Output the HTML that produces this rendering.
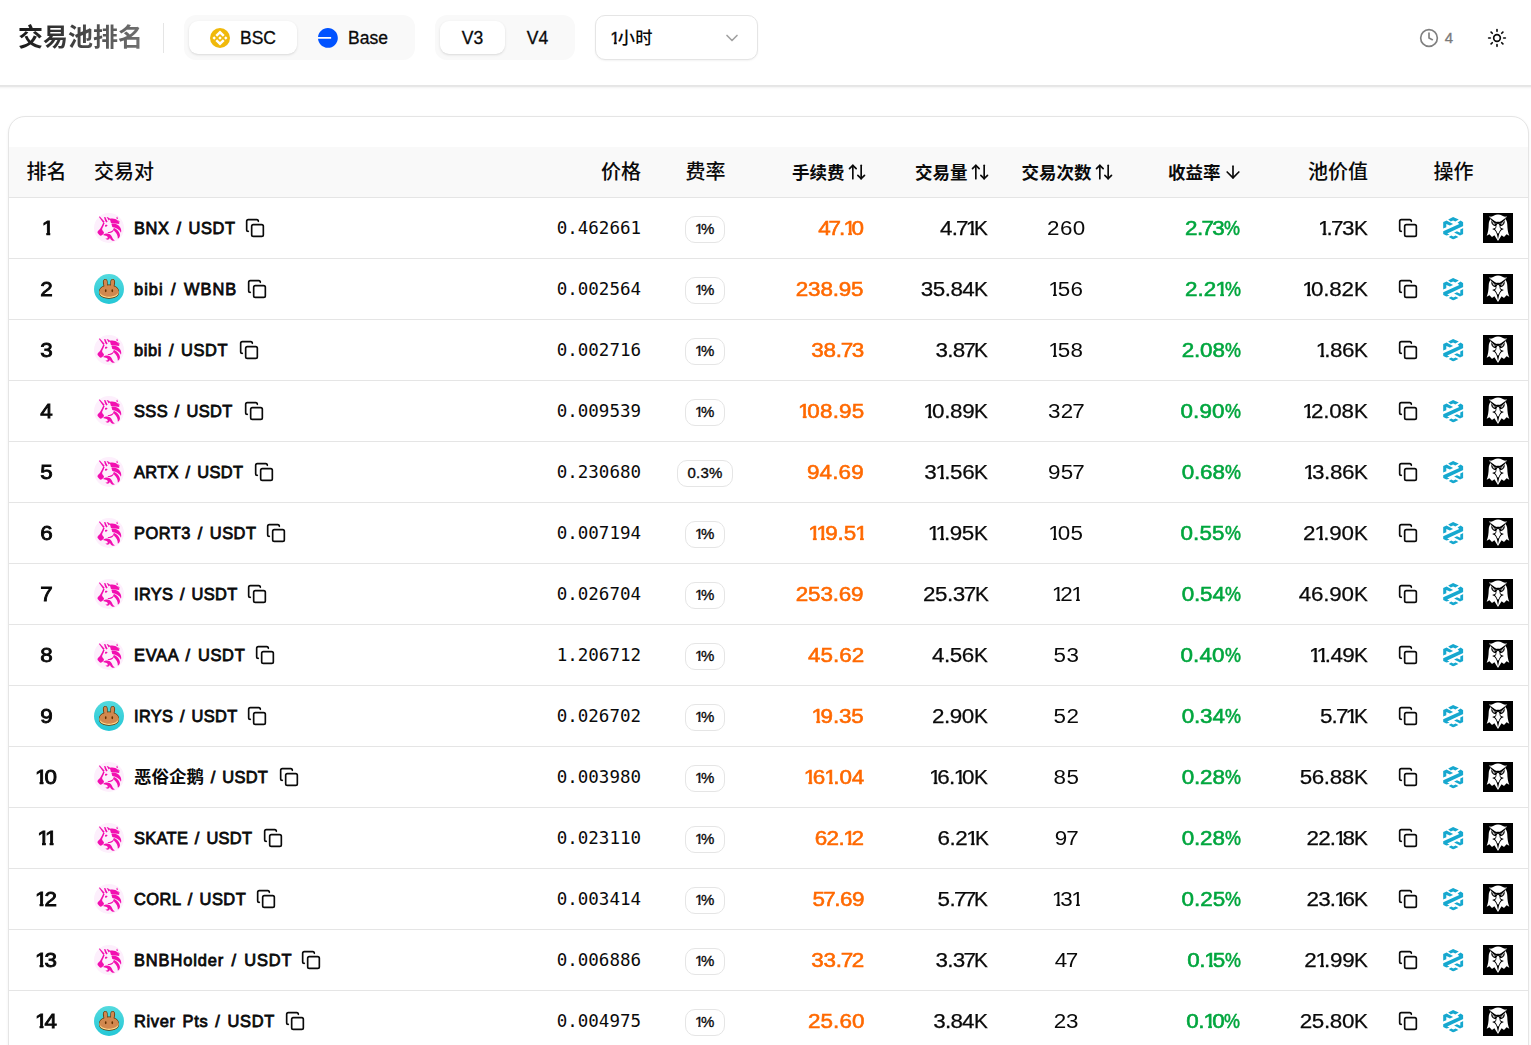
<!DOCTYPE html>
<html lang="zh-CN">
<head>
<meta charset="utf-8">
<title>交易池排名</title>
<style>
*{box-sizing:border-box;margin:0;padding:0}
html,body{width:1531px;height:1045px;overflow:hidden;background:#fff}
body{font-family:"Liberation Sans","Noto Sans CJK SC",sans-serif;color:#0a0a0a;position:relative;-webkit-font-smoothing:antialiased}
svg{display:block;overflow:visible}
.ln{fill:none;stroke:currentColor;stroke-width:2;stroke-linecap:round;stroke-linejoin:round}
/* header */
.hdr{position:absolute;left:-20px;top:0;width:1571px;padding:0;height:86px;background:#fff;border-bottom:1px solid #e5e5e5;box-shadow:0 1px 3px rgba(0,0,0,.10),0 1px 2px -1px rgba(0,0,0,.10)}
.hin{position:absolute;left:20px;top:0;width:1531px;height:85px}
.title{position:absolute;left:18px;top:19.4px;height:36px;line-height:36px;font-size:25px;font-weight:700;white-space:nowrap;background:linear-gradient(90deg,#171717 0%,#737373 100%);-webkit-background-clip:text;background-clip:text;color:#171717;-webkit-text-fill-color:transparent;font-family:"Liberation Sans","Noto Sans CJK SC",sans-serif}
.vdiv{position:absolute;left:163px;top:23px;width:1px;height:30px;background:#e5e5e5}
.tabs{position:absolute;top:15px;height:45px;background:#f9f9f9;border-radius:12px}
.tab{position:absolute;top:6px;height:33px;border-radius:9px;display:flex;align-items:center;justify-content:center;padding-top:2px;font-size:17.5px;line-height:25px;-webkit-text-stroke:.3px currentColor;color:#0a0a0a;white-space:nowrap}
.tab.on{background:#fff;box-shadow:0 1px 3px rgba(0,0,0,.10),0 1px 2px -1px rgba(0,0,0,.10)}
.tab svg{width:20px;height:20px;margin-right:10px;margin-top:-2px;flex:none}
.sel{position:absolute;left:595px;top:15px;width:163px;height:45px;border:1px solid #e5e5e5;border-radius:10px;background:#fff;box-shadow:0 1px 2px rgba(0,0,0,.05);font-size:17.3px;line-height:45px;padding-left:15.5px;white-space:nowrap;font-weight:500}
.sel .o{-webkit-text-stroke:.35px currentColor;margin:0 -.115em 0 -.075em}
.sel svg{position:absolute;left:126px;top:12px;width:20px;height:20px;color:#a1a1a1}
.clock{position:absolute;left:1419px;top:28px;width:20px;height:20px;color:#808080}
.cnt{position:absolute;left:1444.7px;top:28px;height:20px;line-height:20px;font-size:15px;color:#7a7a7a;-webkit-text-stroke:.35px currentColor}
.sun{position:absolute;left:1487px;top:28px;width:20px;height:20px;color:#0a0a0a}
/* card */
.card{position:absolute;left:8px;top:116px;width:1521px;height:960px;border:1px solid #e5e5e5;border-radius:17px;background:#fff;box-shadow:0 1px 3px rgba(0,0,0,.06);overflow:hidden}
.tbl{position:absolute;left:0;top:30px;width:1519px}
.thead{position:relative;height:51px;background:#f9f9f9;border-bottom:1px solid #e5e5e5}
.th{position:absolute;top:0;height:50px;line-height:50px;font-size:20px;font-weight:500;white-space:nowrap;color:#0a0a0a;font-family:"Liberation Sans","Noto Sans CJK SC",sans-serif}
.th.s{font-size:17.5px;font-weight:700;display:flex;align-items:center;padding-top:1.5px}
.th.s svg{width:20px;height:20px;margin-left:2.5px;margin-top:-1.5px;flex:none}
.row{position:relative;height:61px;border-bottom:1px solid #e5e5e5}
.c{position:absolute;top:0;height:60px;line-height:60px;white-space:nowrap;font-size:20px}
.n{display:inline-block;transform:scaleX(1.12);transform-origin:right center}
.n i{font-style:normal;display:inline-block}
.o{font-style:normal;display:inline-block;line-height:1;margin:0 -.155em 0 -.04em;clip-path:polygon(0 -.2em,100% -.2em,100% .6em,.38em .6em,.38em .87em,.21em .87em,.21em .6em,0 .6em)}
.n .s{margin:0 -1px}
.n .k{transform:scaleX(.93);margin:0 -.45px}
.n .p{transform:scaleX(.8);margin:0 -1.6px}
.rank{left:0;width:75px;text-align:center;-webkit-text-stroke:.85px currentColor}
.rank .n,.tx .n{transform-origin:center center}
.pair .n{transform-origin:left center;transform:none;word-spacing:1.8px}
.pair{left:85px;display:flex;align-items:center}
.tok{width:30px;height:30px;flex:none}
.pn{display:block;flex:none;font-size:16.4px;margin-left:10px;-webkit-text-stroke:.8px currentColor;font-family:"Liberation Sans","Noto Sans CJK SC",sans-serif}
.cj{font-weight:700;-webkit-text-stroke:0;font-size:17.5px;letter-spacing:0}
.cp{width:20px;height:20px;margin-left:10px;flex:none}
.price{right:887px;font-family:"DejaVu Sans Mono","Liberation Mono",monospace;font-size:17.5px}
.fee{left:646px;width:100px;text-align:center}
.badge{display:inline-block;width:40px;height:27px;line-height:23px;border:1px solid #e5e5e5;border-radius:10px;font-size:15px;vertical-align:middle;position:relative;top:-.5px;text-align:center;-webkit-text-stroke:.35px currentColor}

.badge.w{width:56px;letter-spacing:.15px}
.fees{right:664px;color:#ff6900;-webkit-text-stroke:.55px currentColor}
.vol{right:540px;-webkit-text-stroke:.25px currentColor}
.tx{left:1007px;width:100px;text-align:center}
.yld{right:287px;color:#00a63e;-webkit-text-stroke:.55px currentColor}
.tvl{right:160px;-webkit-text-stroke:.25px currentColor}
.act{left:0;width:1519px}
.a1{position:absolute;left:1389px;top:20px;width:20px;height:20px}
.a2{position:absolute;left:1433.7px;top:18.6px;width:20.4px;height:22.5px}
.a3{position:absolute;left:1474px;top:15px;width:30px;height:30px}
</style>
</head>
<body>
<svg width="0" height="0" style="position:absolute">
<defs>
<linearGradient id="g-cake" x1="0" y1="0" x2="0" y2="1"><stop offset="0" stop-color="#54dade"/><stop offset="1" stop-color="#24c7d6"/></linearGradient>
<symbol id="i-copy" viewBox="0 0 24 24"><g class="ln"><rect width="14" height="14" x="8" y="8" rx="2" ry="2"/><path d="M4 16c-1.1 0-2-.9-2-2V4c0-1.1.9-2 2-2h10c1.1 0 2 .9 2 2"/></g></symbol>
<symbol id="i-clock" viewBox="0 0 24 24"><g class="ln"><circle cx="12" cy="12" r="10"/><polyline points="12 6 12 12 16 14"/></g></symbol>
<symbol id="i-sun" viewBox="0 0 24 24"><g class="ln"><circle cx="12" cy="12" r="4"/><path d="M12 2v2"/><path d="M12 20v2"/><path d="m4.93 4.93 1.41 1.41"/><path d="m17.66 17.66 1.41 1.41"/><path d="M2 12h2"/><path d="M20 12h2"/><path d="m6.34 17.66-1.41 1.41"/><path d="m19.07 4.93-1.41 1.41"/></g></symbol>
<symbol id="i-ud" viewBox="0 0 24 24"><g class="ln"><path d="m21 16-4 4-4-4"/><path d="M17 20V4"/><path d="m3 8 4-4 4 4"/><path d="M7 4v16"/></g></symbol>
<symbol id="i-down" viewBox="0 0 24 24"><g class="ln"><path d="M12 5v14"/><path d="m19 12-7 7-7-7"/></g></symbol>
<symbol id="i-chev" viewBox="0 0 24 24"><g class="ln"><path d="m6 9 6 6 6-6"/></g></symbol>
<symbol id="i-bsc" viewBox="0 0 32 32"><circle cx="16" cy="16" r="16" fill="#F0B90B"/><path fill="#fff" transform="translate(16 16) scale(1.2) translate(-16 -16)" d="M12.116 14.404L16 10.52l3.886 3.886 2.26-2.26L16 6l-6.144 6.144 2.26 2.26zM6 16l2.26-2.26L10.52 16l-2.26 2.26L6 16zm6.116 1.596L16 21.48l3.886-3.886 2.26 2.259L16 26l-6.144-6.144-.003-.003 2.263-2.257zM21.48 16l2.26-2.26L26 16l-2.26 2.26L21.48 16zm-3.188-.002h.002V16L16 18.294l-2.291-2.29-.004-.004.004-.003.401-.402.195-.195L16 13.706l2.293 2.293z"/></symbol>
<symbol id="i-base" viewBox="0 0 111 111"><circle cx="55.5" cy="55.5" r="55" fill="#fff"/><path fill="#0052FF" d="M54.921 110.034C85.359 110.034 110.034 85.402 110.034 55.017C110.034 24.6319 85.359 0 54.921 0C26.0432 0 2.35281 22.1714 0 50.3923H72.8467V59.6416H0C2.35281 87.8625 26.0432 110.034 54.921 110.034Z"/></symbol>
<symbol id="i-uni" viewBox="0 0 100 100"><circle cx="50" cy="50" r="50" fill="#fdeffc"/><g fill="#f20fb0"><path d="M16 12.500 19.500 11.500 35.500 29.500 31 33z"/><path d="M33.500 13 38.500 14.500C40 20 42.500 25 45.500 29.500L40.500 32C37 26 34.500 19.500 33.500 13z"/><path d="M42 13.500C47 14.500 51.500 17 54 20.500L49 25C47 21 44.500 17 42 13.500z"/><path d="M31 32 35.500 33.500C33.500 40 31 46 27.500 51.500 26.500 54 27 56 28.500 58L32 62.500C34 65 33.500 68 31 70L26.500 74C23.500 76 20.500 76 18 73.500L13.500 68.500C11 65.500 11 61.500 14 59L20 53C24.500 47 28 39.500 31 32z"/><path d="M36.500 40.500C39 38.500 42.500 38.500 45 40.500 44 44 41 46 37.500 45.500z"/><path d="M52.500 19.500C62 16.500 73 19 80 26 82.500 29 84 32.500 84.500 37 76 34 66 34.500 56.500 33z"/><path d="M58 35.500C70 34 82 39 88 49 91 54 91.500 60 90 65.500 85 55 75 49 61 46.500z"/><path d="M66.500 50C77.500 54.500 86 63.500 86.500 74 86.500 79 84 83 79.500 85.500 79.500 75 75 66.500 67 59.500z"/><path d="M74 17.500 77 11.500 80.500 20.500z"/><path d="M79.500 24.500 85 27.500 84 33z"/><path d="M46 63.500C52.500 63.500 58.500 61.500 62.500 57.500 64.500 55 66 52 66.500 48.500 68.500 54 66.500 60 61.500 63.500 57 66.500 51.500 67 46 65.500z"/><path d="M30 73C36.500 67.500 46.500 66.500 53 70.500 58.500 74 60 80.500 63 85.500 64.500 88 67 90 70 91 65 93.500 59.500 92 56 88 54.500 86 53.500 83.500 52.500 81.500 53 85 51 87.500 47.500 88.500 43.500 89.500 39.500 87.500 38 84 41 85.500 44 85 45.500 83 46.500 80.500 45 78 42 76.500 38 75 34 74.500 30 73z"/></g></symbol>
<symbol id="i-cake" viewBox="0 0 30 30"><circle cx="15" cy="15" r="15" fill="url(#g-cake)"/><g transform="translate(15 15.300) scale(1.060) translate(-15 -15.600)"><path fill="#633001" d="M9.300 9.400c-.300-1.800.600-3.600 2.100-3.600 1.400 0 2.300 1.200 2.300 2.900v2.500c.400 0 .900-.100 1.300-.100s.900 0 1.300.100V8.700c0-1.700.900-2.900 2.300-2.900 1.500 0 2.400 1.800 2.100 3.600l-.500 2.900c2.400 1 4.200 2.900 4.200 5.200v1.400c0 3.300-4.200 5.600-9.400 5.600s-9.400-2.300-9.400-5.600v-1.400c0-2.300 1.800-4.200 4.200-5.200z"/><path fill="#fedc90" d="M24 18.900c0 2.900-4 4.900-9 4.900s-9-2-9-4.900v-1.400h18z"/><path fill="#d1884f" d="M10 9.300c-.300-1.500.400-2.900 1.500-2.900 1 0 1.600 1 1.600 2.300v3.200c.600-.100 1.200-.100 1.900-.100s1.300 0 1.900.100V8.700c0-1.300.600-2.300 1.600-2.300 1.100 0 1.800 1.400 1.500 2.900l-.600 3.400c2.700.900 4.600 2.600 4.600 4.800 0 2.900-4 5.200-9 5.200s-9-2.300-9-5.200c0-2.200 1.900-3.900 4.600-4.800z"/><ellipse cx="11.900" cy="16.900" rx=".8" ry="1.400" fill="#633001"/><ellipse cx="18.100" cy="16.900" rx=".8" ry="1.400" fill="#633001"/></g></symbol>
<symbol id="i-dext" viewBox="0 0 20.4 22.5"><g fill="#16a8cf"><path d="M10.100 0 15.800 2.400 12.400 4.500 10.100 3.400 7.800 4.500 5.200 2.400z"/><path d="M10.200 22.500 5.800 20 8.200 18.400 10.300 19.400 12.700 18.400 15.400 20z"/><path d="M3.600 3.400 10.100 7 6.900 8.600 3.300 6.900V10.300L.200 11.500V5z"/><path d="M14.600 5.500 17.600 3.600 20.300 5.200V9.100L4.200 16.500 6.500 17.800 3.300 18.600.200 17.100V14.200L16.300 7z"/><path d="M20.300 11.100V17.100L17 18.600 11.100 15.500 14 14.200 17.300 15.700V12.500z"/></g></symbol>
<symbol id="i-eagle" viewBox="0 0 30 30"><rect width="30" height="30" fill="#000"/><path fill="#fff" d="M6 3.100C8.200 4.400 9.400 3.400 11 2.500 13.500 1.100 16.500 1.100 19 2.500 20.600 3.400 21.800 4.400 24 3.100 23.300 4.700 22.700 5.700 22.600 6.600 23.700 7.600 24.200 9.200 24.300 11.500 24.400 15.500 24.900 19.500 26.300 22.700L23.600 21.200 21 23.900 18.600 22.300 15 28 11.400 22.300 9 23.900 6.400 21.200 3.700 22.700C5.100 19.500 5.600 15.500 5.700 11.500 5.800 9.200 6.300 7.600 7.400 6.600 7.300 5.700 6.700 4.700 6 3.100z"/><path fill="#000" d="M6 3.100C8.500 6.200 11.400 8.300 14 9.100L15 8.600 16 9.100C18.600 8.300 21.500 6.200 24 3.100 22.600 6.800 20.300 9.300 17.400 10.700L15 10 12.600 10.700C9.700 9.300 7.400 6.800 6 3.100z"/><path fill="#000" d="M8.300 7.600C8 9.800 8.800 11.600 10.500 12.600 11.300 13 12.100 13.200 12.800 13.200L12.300 14.700 9.100 15.900 11.700 17.300C13.100 18.700 13.900 20.700 14.300 23L15 26.300 15.700 23C16.100 20.700 16.900 18.700 18.300 17.300L20.900 15.900 17.700 14.700 17.200 13.200C17.900 13.200 18.700 13 19.500 12.600 21.200 11.600 22 9.800 21.700 7.600L20.600 9.200 17.500 10.700 15 9.700 12.500 10.700 9.400 9.200z"/><path fill="#fff" d="M15 10.700C16.200 11.300 16.700 12.400 16.600 13.700L17 15.200 18.300 16 17.400 16.700C16.400 17.900 15.800 19.300 15.500 20.800L15 19.600 14.500 20.800C14.200 19.300 13.600 17.900 12.600 16.700L11.700 16 13 15.200 13.400 13.700C13.300 12.400 13.800 11.300 15 10.700z"/><path fill="#fff" d="M9.500 9.800 12.300 11.100C11.700 11.900 10.400 11.700 9.500 9.800zM20.500 9.800 17.700 11.100C18.300 11.900 19.600 11.700 20.500 9.800z"/></symbol>
</defs>
</svg>

<div class="hdr"><div class="hin">
<div class="title">交易池排名</div>
<div class="vdiv"></div>
<div class="tabs" style="left:184px;width:231px">
<div class="tab on" style="left:5px;width:108px"><svg><use href="#i-bsc"/></svg>BSC</div>
<div class="tab" style="left:113px;width:112px"><svg><use href="#i-base"/></svg>Base</div>
</div>
<div class="tabs" style="left:435px;width:140px">
<div class="tab on" style="left:5px;width:65px">V3</div>
<div class="tab" style="left:70px;width:65px">V4</div>
</div>
<div class="sel"><i class="o">1</i>小时<svg><use href="#i-chev"/></svg></div>
<svg class="clock"><use href="#i-clock"/></svg>
<div class="cnt">4</div>
<svg class="sun"><use href="#i-sun"/></svg>
</div></div>

<div class="card"><div class="tbl">
<div class="thead">
<div class="th" style="left:17.5px">排名</div>
<div class="th" style="left:85px">交易对</div>
<div class="th" style="right:887px">价格</div>
<div class="th" style="left:676.5px">费率</div>
<div class="th s" style="right:661px">手续费<svg><use href="#i-ud"/></svg></div>
<div class="th s" style="right:538px">交易量<svg><use href="#i-ud"/></svg></div>
<div class="th s" style="right:414px">交易次数<svg><use href="#i-ud"/></svg></div>
<div class="th s" style="right:285px">收益率<svg><use href="#i-down"/></svg></div>
<div class="th" style="right:160px">池价值</div>
<div class="th" style="left:1424.5px">操作</div>
</div>

<div class="row">
<div class="c rank"><span class="n"><i class="o">1</i></span></div>
<div class="c pair"><svg class="tok"><use href="#i-uni"/></svg><span class="pn" style="width:101.37px"><span class="n" style="letter-spacing:0.60px">BNX / USDT</span></span><svg class="cp"><use href="#i-copy"/></svg></div>
<div class="c price">0.462661</div>
<div class="c fee"><span class="badge"><i class="o">1</i>%</span></div>
<div class="c fees"><span class="n" style="letter-spacing:-0.83px;margin-right:0.83px">4<i class="s">7</i>.<i class="o">1</i>0</span></div>
<div class="c vol"><span class="n" style="letter-spacing:-0.67px;margin-right:0.67px">4.<i class="s">7</i><i class="o">1</i><i class="k">K</i></span></div>
<div class="c tx"><span class="n" style="letter-spacing:0.45px;margin-right:-0.45px">260</span></div>
<div class="c yld"><span class="n" style="letter-spacing:-0.51px;margin-right:0.51px">2.<i class="s">7</i>3<i class="p">%</i></span></div>
<div class="c tvl"><span class="n" style="letter-spacing:-0.42px;margin-right:0.42px"><i class="o">1</i>.<i class="s">7</i>3<i class="k">K</i></span></div>
<div class="c act"><svg class="a1"><use href="#i-copy"/></svg><svg class="a2"><use href="#i-dext"/></svg><svg class="a3"><use href="#i-eagle"/></svg></div>
</div>
<div class="row">
<div class="c rank"><span class="n">2</span></div>
<div class="c pair"><svg class="tok"><use href="#i-cake"/></svg><span class="pn" style="width:103.47px"><span class="n" style="letter-spacing:1.03px">bibi / WBNB</span></span><svg class="cp"><use href="#i-copy"/></svg></div>
<div class="c price">0.002564</div>
<div class="c fee"><span class="badge"><i class="o">1</i>%</span></div>
<div class="c fees"><span class="n" style="letter-spacing:-0.13px;margin-right:0.13px">238.95</span></div>
<div class="c vol"><span class="n" style="letter-spacing:-0.46px;margin-right:0.46px">35.84<i class="k">K</i></span></div>
<div class="c tx"><span class="n" style="letter-spacing:0.36px;margin-right:-0.36px"><i class="o">1</i>56</span></div>
<div class="c yld"><span class="n" style="letter-spacing:0.07px;margin-right:-0.07px">2.2<i class="o">1</i><i class="p">%</i></span></div>
<div class="c tvl"><span class="n" style="letter-spacing:-0.21px;margin-right:0.21px"><i class="o">1</i>0.82<i class="k">K</i></span></div>
<div class="c act"><svg class="a1"><use href="#i-copy"/></svg><svg class="a2"><use href="#i-dext"/></svg><svg class="a3"><use href="#i-eagle"/></svg></div>
</div>
<div class="row">
<div class="c rank"><span class="n">3</span></div>
<div class="c pair"><svg class="tok"><use href="#i-uni"/></svg><span class="pn" style="width:95.07px"><span class="n" style="letter-spacing:0.61px">bibi / USDT</span></span><svg class="cp"><use href="#i-copy"/></svg></div>
<div class="c price">0.002716</div>
<div class="c fee"><span class="badge"><i class="o">1</i>%</span></div>
<div class="c fees"><span class="n" style="letter-spacing:-0.22px;margin-right:0.22px">38.<i class="s">7</i>3</span></div>
<div class="c vol"><span class="n" style="letter-spacing:-0.58px;margin-right:0.58px">3.8<i class="s">7</i><i class="k">K</i></span></div>
<div class="c tx"><span class="n" style="letter-spacing:0.36px;margin-right:-0.36px"><i class="o">1</i>58</span></div>
<div class="c yld"><span class="n" style="letter-spacing:-0.11px;margin-right:0.11px">2.08<i class="p">%</i></span></div>
<div class="c tvl"><span class="n" style="letter-spacing:-0.38px;margin-right:0.38px"><i class="o">1</i>.86<i class="k">K</i></span></div>
<div class="c act"><svg class="a1"><use href="#i-copy"/></svg><svg class="a2"><use href="#i-dext"/></svg><svg class="a3"><use href="#i-eagle"/></svg></div>
</div>
<div class="row">
<div class="c rank"><span class="n">4</span></div>
<div class="c pair"><svg class="tok"><use href="#i-uni"/></svg><span class="pn" style="width:100.47px"><span class="n" style="letter-spacing:0.41px">SSS / USDT</span></span><svg class="cp"><use href="#i-copy"/></svg></div>
<div class="c price">0.009539</div>
<div class="c fee"><span class="badge"><i class="o">1</i>%</span></div>
<div class="c fees"><span class="n" style="letter-spacing:0.20px;margin-right:-0.20px"><i class="o">1</i>08.95</span></div>
<div class="c vol"><span class="n" style="letter-spacing:-0.25px;margin-right:0.25px"><i class="o">1</i>0.89<i class="k">K</i></span></div>
<div class="c tx"><span class="n" style="letter-spacing:0.18px;margin-right:-0.18px">32<i class="s">7</i></span></div>
<div class="c yld"><span class="n" style="letter-spacing:0.11px;margin-right:-0.11px">0.90<i class="p">%</i></span></div>
<div class="c tvl"><span class="n" style="letter-spacing:-0.21px;margin-right:0.21px"><i class="o">1</i>2.08<i class="k">K</i></span></div>
<div class="c act"><svg class="a1"><use href="#i-copy"/></svg><svg class="a2"><use href="#i-dext"/></svg><svg class="a3"><use href="#i-eagle"/></svg></div>
</div>
<div class="row">
<div class="c rank"><span class="n">5</span></div>
<div class="c pair"><svg class="tok"><use href="#i-uni"/></svg><span class="pn" style="width:110.37px"><span class="n" style="letter-spacing:0.36px">ARTX / USDT</span></span><svg class="cp"><use href="#i-copy"/></svg></div>
<div class="c price">0.230680</div>
<div class="c fee"><span class="badge w">0.3%</span></div>
<div class="c fees"><span class="n" style="letter-spacing:0.16px;margin-right:-0.16px">94.69</span></div>
<div class="c vol"><span class="n" style="letter-spacing:-0.25px;margin-right:0.25px">3<i class="o">1</i>.56<i class="k">K</i></span></div>
<div class="c tx"><span class="n" style="letter-spacing:0.18px;margin-right:-0.18px">95<i class="s">7</i></span></div>
<div class="c yld"><span class="n" style="letter-spacing:-0.11px;margin-right:0.11px">0.68<i class="p">%</i></span></div>
<div class="c tvl"><span class="n" style="letter-spacing:-0.29px;margin-right:0.29px"><i class="o">1</i>3.86<i class="k">K</i></span></div>
<div class="c act"><svg class="a1"><use href="#i-copy"/></svg><svg class="a2"><use href="#i-dext"/></svg><svg class="a3"><use href="#i-eagle"/></svg></div>
</div>
<div class="row">
<div class="c rank"><span class="n">6</span></div>
<div class="c pair"><svg class="tok"><use href="#i-uni"/></svg><span class="pn" style="width:122.27px"><span class="n" style="letter-spacing:0.52px">PORT3 / USDT</span></span><svg class="cp"><use href="#i-copy"/></svg></div>
<div class="c price">0.007194</div>
<div class="c fee"><span class="badge"><i class="o">1</i>%</span></div>
<div class="c fees"><span class="n" style="letter-spacing:-0.05px;margin-right:0.05px"><i class="o">1</i><i class="o">1</i>9.5<i class="o">1</i></span></div>
<div class="c vol"><span class="n" style="letter-spacing:-0.43px;margin-right:0.43px"><i class="o">1</i><i class="o">1</i>.95<i class="k">K</i></span></div>
<div class="c tx"><span class="n" style="letter-spacing:0.36px;margin-right:-0.36px"><i class="o">1</i>05</span></div>
<div class="c yld"><span class="n" style="letter-spacing:0.11px;margin-right:-0.11px">0.55<i class="p">%</i></span></div>
<div class="c tvl"><span class="n" style="letter-spacing:-0.21px;margin-right:0.21px">2<i class="o">1</i>.90<i class="k">K</i></span></div>
<div class="c act"><svg class="a1"><use href="#i-copy"/></svg><svg class="a2"><use href="#i-dext"/></svg><svg class="a3"><use href="#i-eagle"/></svg></div>
</div>
<div class="row">
<div class="c rank"><span class="n"><i class="s">7</i></span></div>
<div class="c pair"><svg class="tok"><use href="#i-uni"/></svg><span class="pn" style="width:102.97px"><span class="n" style="letter-spacing:0.33px">IRYS / USDT</span></span><svg class="cp"><use href="#i-copy"/></svg></div>
<div class="c price">0.026704</div>
<div class="c fee"><span class="badge"><i class="o">1</i>%</span></div>
<div class="c fees"><span class="n" style="letter-spacing:-0.13px;margin-right:0.13px">253.69</span></div>
<div class="c vol"><span class="n" style="letter-spacing:-0.41px;margin-right:0.41px">25.3<i class="s">7</i><i class="k">K</i></span></div>
<div class="c tx"><span class="n" style="letter-spacing:-0.40px;margin-right:0.40px"><i class="o">1</i>2<i class="o">1</i></span></div>
<div class="c yld"><span class="n" style="letter-spacing:-0.11px;margin-right:0.11px">0.54<i class="p">%</i></span></div>
<div class="c tvl"><span class="n" style="letter-spacing:-0.18px;margin-right:0.18px">46.90<i class="k">K</i></span></div>
<div class="c act"><svg class="a1"><use href="#i-copy"/></svg><svg class="a2"><use href="#i-dext"/></svg><svg class="a3"><use href="#i-eagle"/></svg></div>
</div>
<div class="row">
<div class="c rank"><span class="n">8</span></div>
<div class="c pair"><svg class="tok"><use href="#i-uni"/></svg><span class="pn" style="width:111.37px"><span class="n" style="letter-spacing:0.72px">EVAA / USDT</span></span><svg class="cp"><use href="#i-copy"/></svg></div>
<div class="c price">1.206712</div>
<div class="c fee"><span class="badge"><i class="o">1</i>%</span></div>
<div class="c fees"><span class="n" style="letter-spacing:0.04px;margin-right:-0.04px">45.62</span></div>
<div class="c vol"><span class="n" style="letter-spacing:-0.47px;margin-right:0.47px">4.56<i class="k">K</i></span></div>
<div class="c tx"><span class="n" style="letter-spacing:0.50px;margin-right:-0.50px">53</span></div>
<div class="c yld"><span class="n" style="letter-spacing:0.11px;margin-right:-0.11px">0.40<i class="p">%</i></span></div>
<div class="c tvl"><span class="n" style="letter-spacing:-0.55px;margin-right:0.55px"><i class="o">1</i><i class="o">1</i>.49<i class="k">K</i></span></div>
<div class="c act"><svg class="a1"><use href="#i-copy"/></svg><svg class="a2"><use href="#i-dext"/></svg><svg class="a3"><use href="#i-eagle"/></svg></div>
</div>
<div class="row">
<div class="c rank"><span class="n">9</span></div>
<div class="c pair"><svg class="tok"><use href="#i-cake"/></svg><span class="pn" style="width:102.97px"><span class="n" style="letter-spacing:0.33px">IRYS / USDT</span></span><svg class="cp"><use href="#i-copy"/></svg></div>
<div class="c price">0.026702</div>
<div class="c fee"><span class="badge"><i class="o">1</i>%</span></div>
<div class="c fees"><span class="n" style="letter-spacing:-0.09px;margin-right:0.09px"><i class="o">1</i>9.35</span></div>
<div class="c vol"><span class="n" style="letter-spacing:-0.47px;margin-right:0.47px">2.90<i class="k">K</i></span></div>
<div class="c tx"><span class="n" style="letter-spacing:0.50px;margin-right:-0.50px">52</span></div>
<div class="c yld"><span class="n" style="letter-spacing:-0.11px;margin-right:0.11px">0.34<i class="p">%</i></span></div>
<div class="c tvl"><span class="n" style="letter-spacing:-0.74px;margin-right:0.74px">5.<i class="s">7</i><i class="o">1</i><i class="k">K</i></span></div>
<div class="c act"><svg class="a1"><use href="#i-copy"/></svg><svg class="a2"><use href="#i-dext"/></svg><svg class="a3"><use href="#i-eagle"/></svg></div>
</div>
<div class="row">
<div class="c rank"><span class="n" style="letter-spacing:0.50px;margin-right:-0.50px"><i class="o">1</i>0</span></div>
<div class="c pair"><svg class="tok"><use href="#i-uni"/></svg><span class="pn" style="width:134.97px"><span class="n" style="letter-spacing:0.32px"><span class="cj">恶俗企鹅</span> / USDT</span></span><svg class="cp"><use href="#i-copy"/></svg></div>
<div class="c price">0.003980</div>
<div class="c fee"><span class="badge"><i class="o">1</i>%</span></div>
<div class="c fees"><span class="n" style="letter-spacing:-0.02px;margin-right:0.02px"><i class="o">1</i>6<i class="o">1</i>.04</span></div>
<div class="c vol"><span class="n" style="letter-spacing:-0.61px;margin-right:0.61px"><i class="o">1</i>6.<i class="o">1</i>0<i class="k">K</i></span></div>
<div class="c tx"><span class="n" style="letter-spacing:0.50px;margin-right:-0.50px">85</span></div>
<div class="c yld"><span class="n" style="letter-spacing:-0.11px;margin-right:0.11px">0.28<i class="p">%</i></span></div>
<div class="c tvl"><span class="n" style="letter-spacing:-0.38px;margin-right:0.38px">56.88<i class="k">K</i></span></div>
<div class="c act"><svg class="a1"><use href="#i-copy"/></svg><svg class="a2"><use href="#i-dext"/></svg><svg class="a3"><use href="#i-eagle"/></svg></div>
</div>
<div class="row">
<div class="c rank"><span class="n" style="letter-spacing:-0.36px;margin-right:0.36px"><i class="o">1</i><i class="o">1</i></span></div>
<div class="c pair"><svg class="tok"><use href="#i-uni"/></svg><span class="pn" style="width:119.07px"><span class="n" style="letter-spacing:0.33px">SKATE / USDT</span></span><svg class="cp"><use href="#i-copy"/></svg></div>
<div class="c price">0.023110</div>
<div class="c fee"><span class="badge"><i class="o">1</i>%</span></div>
<div class="c fees"><span class="n" style="letter-spacing:-0.56px;margin-right:0.56px">62.<i class="o">1</i>2</span></div>
<div class="c vol"><span class="n" style="letter-spacing:-0.51px;margin-right:0.51px">6.2<i class="o">1</i><i class="k">K</i></span></div>
<div class="c tx"><span class="n">9<i class="s">7</i></span></div>
<div class="c yld"><span class="n" style="letter-spacing:-0.11px;margin-right:0.11px">0.28<i class="p">%</i></span></div>
<div class="c tvl"><span class="n" style="letter-spacing:-0.70px;margin-right:0.70px">22.<i class="o">1</i>8<i class="k">K</i></span></div>
<div class="c act"><svg class="a1"><use href="#i-copy"/></svg><svg class="a2"><use href="#i-dext"/></svg><svg class="a3"><use href="#i-eagle"/></svg></div>
</div>
<div class="row">
<div class="c rank"><span class="n" style="letter-spacing:0.50px;margin-right:-0.50px"><i class="o">1</i>2</span></div>
<div class="c pair"><svg class="tok"><use href="#i-uni"/></svg><span class="pn" style="width:112.47px"><span class="n" style="letter-spacing:0.49px">CORL / USDT</span></span><svg class="cp"><use href="#i-copy"/></svg></div>
<div class="c price">0.003414</div>
<div class="c fee"><span class="badge"><i class="o">1</i>%</span></div>
<div class="c fees"><span class="n" style="letter-spacing:-0.42px;margin-right:0.42px">5<i class="s">7</i>.69</span></div>
<div class="c vol"><span class="n" style="letter-spacing:-0.51px;margin-right:0.51px">5.<i class="s">7</i><i class="s">7</i><i class="k">K</i></span></div>
<div class="c tx"><span class="n" style="letter-spacing:-0.40px;margin-right:0.40px"><i class="o">1</i>3<i class="o">1</i></span></div>
<div class="c yld"><span class="n" style="letter-spacing:-0.02px;margin-right:0.02px">0.25<i class="p">%</i></span></div>
<div class="c tvl"><span class="n" style="letter-spacing:-0.70px;margin-right:0.70px">23.<i class="o">1</i>6<i class="k">K</i></span></div>
<div class="c act"><svg class="a1"><use href="#i-copy"/></svg><svg class="a2"><use href="#i-dext"/></svg><svg class="a3"><use href="#i-eagle"/></svg></div>
</div>
<div class="row">
<div class="c rank"><span class="n" style="letter-spacing:0.50px;margin-right:-0.50px"><i class="o">1</i>3</span></div>
<div class="c pair"><svg class="tok"><use href="#i-uni"/></svg><span class="pn" style="width:157.37px"><span class="n" style="letter-spacing:0.91px">BNBHolder / USDT</span></span><svg class="cp"><use href="#i-copy"/></svg></div>
<div class="c price">0.006886</div>
<div class="c fee"><span class="badge"><i class="o">1</i>%</span></div>
<div class="c fees"><span class="n" style="letter-spacing:-0.22px;margin-right:0.22px">33.<i class="s">7</i>2</span></div>
<div class="c vol"><span class="n" style="letter-spacing:-0.58px;margin-right:0.58px">3.3<i class="s">7</i><i class="k">K</i></span></div>
<div class="c tx"><span class="n" style="letter-spacing:-0.40px;margin-right:0.40px">4<i class="s">7</i></span></div>
<div class="c yld"><span class="n" style="letter-spacing:-0.38px;margin-right:0.38px">0.<i class="o">1</i>5<i class="p">%</i></span></div>
<div class="c tvl"><span class="n" style="letter-spacing:-0.29px;margin-right:0.29px">2<i class="o">1</i>.99<i class="k">K</i></span></div>
<div class="c act"><svg class="a1"><use href="#i-copy"/></svg><svg class="a2"><use href="#i-dext"/></svg><svg class="a3"><use href="#i-eagle"/></svg></div>
</div>
<div class="row">
<div class="c rank"><span class="n" style="letter-spacing:0.50px;margin-right:-0.50px"><i class="o">1</i>4</span></div>
<div class="c pair"><svg class="tok"><use href="#i-cake"/></svg><span class="pn" style="width:141.27px"><span class="n" style="letter-spacing:0.67px">River Pts / USDT</span></span><svg class="cp"><use href="#i-copy"/></svg></div>
<div class="c price">0.004975</div>
<div class="c fee"><span class="badge"><i class="o">1</i>%</span></div>
<div class="c fees"><span class="n" style="letter-spacing:0.09px;margin-right:-0.09px">25.60</span></div>
<div class="c vol"><span class="n" style="letter-spacing:-0.69px;margin-right:0.69px">3.84<i class="k">K</i></span></div>
<div class="c tx"><span class="n">23</span></div>
<div class="c yld"><span class="n" style="letter-spacing:-0.25px;margin-right:0.25px">0.<i class="o">1</i>0<i class="p">%</i></span></div>
<div class="c tvl"><span class="n" style="letter-spacing:-0.29px;margin-right:0.29px">25.80<i class="k">K</i></span></div>
<div class="c act"><svg class="a1"><use href="#i-copy"/></svg><svg class="a2"><use href="#i-dext"/></svg><svg class="a3"><use href="#i-eagle"/></svg></div>
</div>
</div></div>
</body>
</html>
